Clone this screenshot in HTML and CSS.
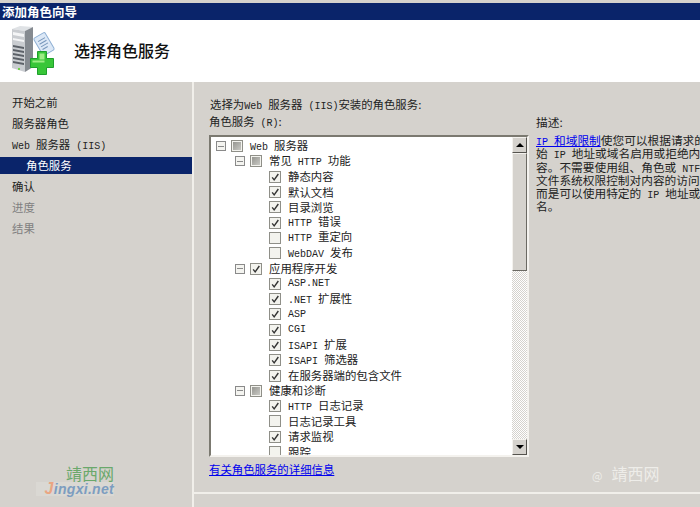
FILE: index.html
```html
<!DOCTYPE html>
<html lang="zh">
<head>
<meta charset="utf-8">
<title>添加角色向导</title>
<link rel="stylesheet" href="styles.css">
</head>
<body>
<svg class="defs" width="0" height="0">
  <symbol id="chk" viewBox="0 0 12 12"><path d="M2.6 6.4l2.4 3L10 2.4" fill="none" stroke="#333" stroke-width="1.7"/></symbol>
</svg>
<div class="window">
  <div class="titlebar">添加角色向导</div>
  <header class="banner">
    <svg class="logo" width="46" height="52" viewBox="0 0 46 52">
      <path d="M1 4l8-3 13 1-8 4z" fill="#dfe2e5"/>
      <path d="M14 6l8-4v40l-8 5z" fill="#858a90"/>
      <path d="M1 4l13 2v41L1 43z" fill="#c9ccd0"/>
      <path d="M2 7l11 2v3L2 10zM2 13l11 2v2L2 15z" fill="#f4f5f6"/>
      <path d="M2 20l11 2v2L2 22zM2 24l11 2v2L2 26zM2 28l11 2v2L2 30zM2 32l11 2v2L2 34zM2 36l11 2v2L2 38z" fill="#5c6168"/>
      <rect x="7" y="43" width="2" height="2" fill="#6fd04a"/>
      <g transform="rotate(-30 33 19)">
        <rect x="26.5" y="9" width="13" height="20" rx="1.5" fill="#dce8f6" stroke="#8fb0d4"/>
        <path d="M29 14h8M29 17h8M29 20h8M29 23h6" stroke="#7796bb" stroke-width="1"/>
      </g>
      <path d="M26.5 26.5h9v7h7v9h-7v7h-9v-7h-7v-9h7z" fill="#38c638" stroke="#1f9f2c"/>
      <path d="M28.5 28.5h5v6h-5zM21.5 35.5h12v2h-12z" fill="#9cec84"/>
    </svg>
    <h1 class="page-title">选择角色服务</h1>
  </header>
  <div class="body">
    <nav class="steps">
      <div class="step">开始之前</div>
      <div class="step">服务器角色</div>
      <div class="step"><span class="l">Web </span>服务器<span class="l"> (IIS)</span></div>
      <div class="step sub current">角色服务</div>
      <div class="step">确认</div>
      <div class="step off">进度</div>
      <div class="step off">结果</div>
    </nav>
    <main class="content">
      <section class="left-col">
        <p class="intro">选择为<span class="l">Web </span>服务器<span class="l"> (IIS)</span>安装的角色服务:</p>
        <p class="label">角色服务<span class="l"> (R)</span>:</p>
        <div class="treebox">
          <div class="tree">
            <div class="row lv0"><i class="tog"></i><i class="box mixed"></i><span><span class="l">Web </span>服务器</span></div>
            <div class="row lv1"><i class="tog"></i><i class="box mixed"></i><span>常见<span class="l"> HTTP </span>功能</span></div>
            <div class="row lv2"><i class="box"><svg><use href="#chk"/></svg></i><span>静态内容</span></div>
            <div class="row lv2"><i class="box"><svg><use href="#chk"/></svg></i><span>默认文档</span></div>
            <div class="row lv2"><i class="box"><svg><use href="#chk"/></svg></i><span>目录浏览</span></div>
            <div class="row lv2"><i class="box"><svg><use href="#chk"/></svg></i><span><span class="l">HTTP </span>错误</span></div>
            <div class="row lv2"><i class="box"></i><span><span class="l">HTTP </span>重定向</span></div>
            <div class="row lv2"><i class="box"></i><span><span class="l">WebDAV </span>发布</span></div>
            <div class="row lv1"><i class="tog"></i><i class="box"><svg><use href="#chk"/></svg></i><span>应用程序开发</span></div>
            <div class="row lv2"><i class="box"><svg><use href="#chk"/></svg></i><span class="l">ASP.NET</span></div>
            <div class="row lv2"><i class="box"><svg><use href="#chk"/></svg></i><span><span class="l">.NET </span>扩展性</span></div>
            <div class="row lv2"><i class="box"><svg><use href="#chk"/></svg></i><span class="l">ASP</span></div>
            <div class="row lv2"><i class="box"><svg><use href="#chk"/></svg></i><span class="l">CGI</span></div>
            <div class="row lv2"><i class="box"><svg><use href="#chk"/></svg></i><span><span class="l">ISAPI </span>扩展</span></div>
            <div class="row lv2"><i class="box"><svg><use href="#chk"/></svg></i><span><span class="l">ISAPI </span>筛选器</span></div>
            <div class="row lv2"><i class="box"><svg><use href="#chk"/></svg></i><span>在服务器端的包含文件</span></div>
            <div class="row lv1"><i class="tog"></i><i class="box mixed"></i><span>健康和诊断</span></div>
            <div class="row lv2"><i class="box"><svg><use href="#chk"/></svg></i><span><span class="l">HTTP </span>日志记录</span></div>
            <div class="row lv2"><i class="box"></i><span>日志记录工具</span></div>
            <div class="row lv2"><i class="box"><svg><use href="#chk"/></svg></i><span>请求监视</span></div>
            <div class="row lv2"><i class="box"></i><span>跟踪</span></div>
          </div>
          <div class="scrollbar">
            <div class="sb-btn"><i class="arrow up"></i></div>
            <div class="sb-thumb"></div>
            <div class="sb-track"></div>
            <div class="sb-btn"><i class="arrow down"></i></div>
          </div>
        </div>
        <a class="more" href="#">有关角色服务的详细信息</a>
      </section>
      <aside class="desc">
        <p class="desc-title">描述:</p>
        <p class="desc-text"><a href="#"><span class="l">IP </span>和域限制</a>使您可以根据请求的来源</p>
        <p class="desc-text">始<span class="l"> IP </span>地址或域名启用或拒绝内</p>
        <p class="desc-text">容。不需要使用组、角色或<span class="l"> NTFS</span></p>
        <p class="desc-text">文件系统权限控制对内容的访问，</p>
        <p class="desc-text">而是可以使用特定的<span class="l"> IP </span>地址或域</p>
        <p class="desc-text">名。</p>
      </aside>
    </main>
  </div>
  <div class="mark-left">
    <div class="mark-cn">靖西网</div>
    <div class="mark-en"><b>J</b>ingxi.net</div>
  </div>
  <div class="mark-right"><span class="at">@</span>靖西网</div>
</div>
</body>
</html>
```
FILE: styles.css
```css
* { box-sizing: border-box; }
html, body { margin: 0; padding: 0; overflow: hidden; }
body {
  width: 700px; height: 507px; background: #d5d2cd; color: #222;
  font: 11.4px/15px "Noto Sans CJK SC", "Liberation Sans", sans-serif;
}
.defs { position: absolute; }
p { margin: 0; }
.l { font-family: "Liberation Mono", monospace; font-size: 10px; }
.window { position: relative; width: 700px; height: 507px; padding-top: 3px; display: flex; flex-direction: column; overflow: hidden; }
.titlebar { height: 17px; background: #0a246a; color: #fff; font-weight: 700; font-size: 12.5px; line-height: 17px; padding-left: 2px; }
.banner { height: 62px; background: #fff; display: flex; align-items: center; padding-left: 11px; }
.logo { margin-right: 17px; flex: none; }
.page-title { margin: 0 0 1px; font-size: 16px; font-weight: 500; color: #111; }
.body { flex: 1; display: flex; min-height: 0; }
.steps { width: 192px; flex: none; padding-top: 10px; }
.step { height: 21px; line-height: 21px; padding-left: 12px; white-space: nowrap; color: #222; }
.step.sub { padding-left: 26px; height: 17px; line-height: 17px; margin: 2px 0; }
.current { background: #0a246a; color: #fff; }
.off { color: #808080; }
.content { flex: 1; border-left: 2px solid #f1efea; display: flex; padding: 15px 0 0 15px; position: relative; }
.content::after { content: ""; position: absolute; left: 0; right: 0; top: 410px; height: 2px; background: #f1efea; }
.left-col { width: 327px; flex: none; }
.intro { height: 15px; line-height: 15px; white-space: nowrap; margin-left: 1px; }
.label { height: 15px; line-height: 15px; margin-top: 2px; }
.treebox { margin-top: 6px; width: 320px; height: 322px; background: #fff; border: 2px solid; border-color: #7b7970 #f4f2ee #f4f2ee #7b7970; display: flex; }
.tree { flex: 1; min-width: 0; padding-top: 1.5px; overflow: hidden; }
.row { height: 15.3px; display: flex; align-items: center; white-space: nowrap; line-height: 15px; }
.lv0 { padding-left: 5px; }
.lv1 { padding-left: 24px; }
.lv2 { padding-left: 58px; }
.tog { width: 10px; height: 10px; border: 1px solid #8a8a8a; background: linear-gradient(#8a8a8a,#8a8a8a) center/6px 1px no-repeat, #f4f4f0; margin-right: 5px; flex: none; }
.box { width: 12px; height: 12px; border: 1px solid #8f8f88; background: #f3f3ee; margin-right: 7px; flex: none; display: block; }
.box svg { display: block; width: 10px; height: 10px; }
.mixed { background: linear-gradient(135deg,#8f8f8a,#cfcfca); box-shadow: inset 0 0 0 1px #f3f3ee; }
.scrollbar { width: 15px; flex: none; display: flex; flex-direction: column; background: #e9e7e2; }
.sb-btn { height: 16px; flex: none; background: #d5d2cd; border: 1px solid; border-color: #f4f2ee #55534e #55534e #f4f2ee; display: flex; align-items: center; justify-content: center; }
.arrow { width: 0; height: 0; border-left: 4px solid transparent; border-right: 4px solid transparent; }
.up { border-bottom: 4px solid #000; }
.down { border-top: 4px solid #000; }
.sb-thumb { height: 118px; flex: none; background: #d5d2cd; border: 1px solid; border-color: #f4f2ee #6b6963 #6b6963 #f4f2ee; }
.sb-track { flex: 1; background: repeating-conic-gradient(#d5d2cd 0 25%, #fff 0 50%) 0 0/2px 2px; }
.more, .desc a { color: #0000ee; text-decoration: underline; }
.more { display: block; margin-top: 4px; line-height: 16px; white-space: nowrap; }
.desc { padding-top: 17px; white-space: nowrap; min-width: 0; font-size: 11.7px; }
.desc-title { height: 16px; line-height: 15px; margin-bottom: 3px; }
.desc-text { height: 13.3px; line-height: 13.3px; }
.mark-left { position: absolute; left: 36px; top: 465px; width: 78px; text-align: right; }
.mark-cn { font-size: 16px; line-height: 17px; color: #6aa86b; }
.mark-en { font: italic 700 14px/14px "Liberation Sans", sans-serif; color: #7d9dc0; letter-spacing: .3px; background: #dad8d3; }
.mark-en b { color: #eaa582; font-size: 16px; }
.mark-right { position: absolute; left: 592px; top: 463px; color: #eeede9; font-size: 16px; line-height: 20px; white-space: nowrap; }
.at { font-size: 11px; margin-right: 9px; }
```
